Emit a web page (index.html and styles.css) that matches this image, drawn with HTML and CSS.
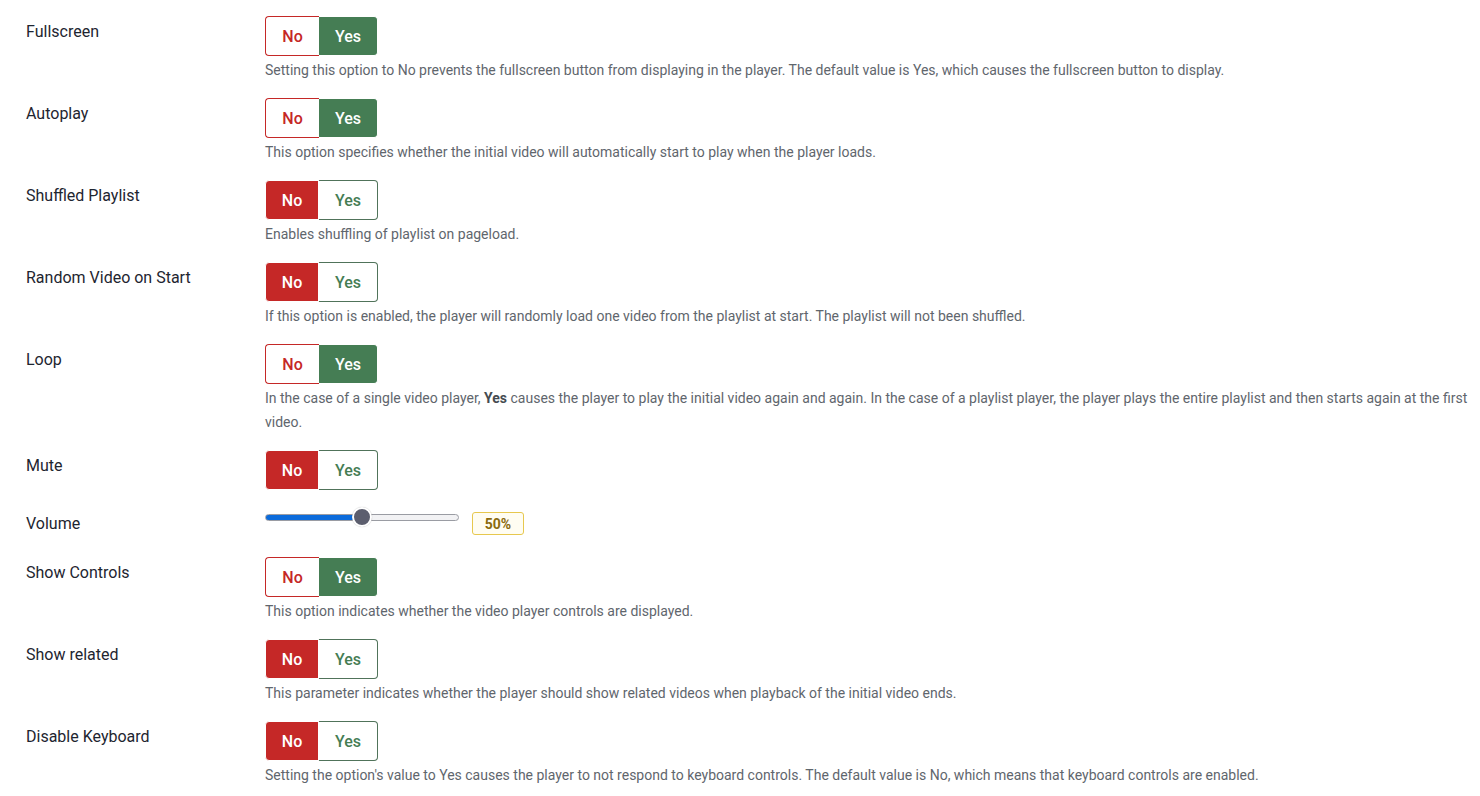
FILE: index.html
```html
<!DOCTYPE html>
<html lang="en">
	<head>
		<meta charset="UTF-8" />
		<meta name="viewport" content="width=device-width, initial-scale=1.0" />
		<title>Player Options</title>
		<link rel="stylesheet" href="styles.css">
	</head>
	<body>
		<form class="options">
			<div class="control-group">
				<div class="control-label">Fullscreen</div>
				<div class="controls">
					<div class="switcher yes-on"><span class="sw-no">No</span><span class="sw-yes">Yes</span></div>
					<div class="form-text">Setting this option to No prevents the fullscreen button from displaying in the player. The default value is Yes, which causes the fullscreen button to display.</div>
				</div>
			</div>

			<div class="control-group">
				<div class="control-label">Autoplay</div>
				<div class="controls">
					<div class="switcher yes-on"><span class="sw-no">No</span><span class="sw-yes">Yes</span></div>
					<div class="form-text">This option specifies whether the initial video will automatically start to play when the player loads.</div>
				</div>
			</div>

			<div class="control-group">
				<div class="control-label">Shuffled Playlist</div>
				<div class="controls">
					<div class="switcher no-on"><span class="sw-no">No</span><span class="sw-yes">Yes</span></div>
					<div class="form-text">Enables shuffling of playlist on pageload.</div>
				</div>
			</div>

			<div class="control-group">
				<div class="control-label">Random Video on Start</div>
				<div class="controls">
					<div class="switcher no-on"><span class="sw-no">No</span><span class="sw-yes">Yes</span></div>
					<div class="form-text">If this option is enabled, the player will randomly load one video from the playlist at start. The playlist will not been shuffled.</div>
				</div>
			</div>

			<div class="control-group">
				<div class="control-label">Loop</div>
				<div class="controls">
					<div class="switcher yes-on"><span class="sw-no">No</span><span class="sw-yes">Yes</span></div>
					<div class="form-text">In the case of a single video player, <strong>Yes</strong> causes the player to play the initial video again and again. In the case of a playlist player, the player plays the entire playlist and then starts again at the first video.</div>
				</div>
			</div>

			<div class="control-group">
				<div class="control-label">Mute</div>
				<div class="controls">
					<div class="switcher no-on"><span class="sw-no">No</span><span class="sw-yes">Yes</span></div>
				</div>
			</div>

			<div class="control-group">
				<div class="control-label volume-label">Volume</div>
				<div class="controls volume">
					<input type="range" class="range" min="0" max="100" value="50" style="--value: 50%" />
					<span class="badge">50%</span>
				</div>
			</div>

			<div class="control-group">
				<div class="control-label">Show Controls</div>
				<div class="controls">
					<div class="switcher yes-on"><span class="sw-no">No</span><span class="sw-yes">Yes</span></div>
					<div class="form-text">This option indicates whether the video player controls are displayed.</div>
				</div>
			</div>

			<div class="control-group">
				<div class="control-label">Show related</div>
				<div class="controls">
					<div class="switcher no-on"><span class="sw-no">No</span><span class="sw-yes">Yes</span></div>
					<div class="form-text">This parameter indicates whether the player should show related videos when playback of the initial video ends.</div>
				</div>
			</div>

			<div class="control-group">
				<div class="control-label">Disable Keyboard</div>
				<div class="controls">
					<div class="switcher no-on"><span class="sw-no">No</span><span class="sw-yes">Yes</span></div>
					<div class="form-text">Setting the option's value to Yes causes the player to not respond to keyboard controls. The default value is No, which means that keyboard controls are enabled.</div>
				</div>
			</div>
		</form>
	</body>
</html>
```

FILE: styles.css
```css
body {
	font-family: Roboto, "Liberation Sans", Arial, sans-serif;
	margin: 0;
	padding: 0;
	background-color: #fff;
	color: #1e2530;
}

.options {
	padding: 16px 10px 0 26px;
}

.control-group {
	display: flex;
	margin-bottom: 16px;
}

.control-label {
	width: 239px;
	flex-shrink: 0;
	font-size: 16px;
	line-height: 24px;
	padding-top: 4px;
}

.volume-label {
	padding-top: 6px;
}

.controls {
	flex: 1;
}

.switcher {
	display: flex;
	height: 40px;
	font-size: 16px;
	font-weight: 500;
}

.switcher span {
	display: flex;
	align-items: center;
	justify-content: center;
	box-sizing: border-box;
	border: 1px solid;
}

.sw-no {
	width: 54px;
	border-color: #c52827;
	color: #c52827;
	border-radius: 4px 0 0 4px;
}

.sw-yes {
	width: 59px;
	border-color: #457d54;
	color: #457d54;
	border-radius: 0 4px 4px 0;
	border-left: none !important;
}

.no-on .sw-no {
	background-color: #c52827;
	color: #fff;
}

.yes-on .sw-yes {
	background-color: #457d54;
	color: #fff;
}

.yes-on .sw-no {
	border-right: none;
}

.no-on .sw-yes {
	border-color: #50735a;
}

.form-text {
	margin-top: 2px;
	font-size: 14px;
	line-height: 24px;
	color: #5f666d;
}

.form-text strong {
	color: #454b51;
}

.volume {
	display: flex;
	align-items: flex-start;
	min-height: 35px;
	padding-top: 1px;
	box-sizing: border-box;
}

.range {
	-webkit-appearance: none;
	appearance: none;
	width: 194px;
	height: 20px;
	margin: 0;
	background: transparent;
}

.range::-webkit-slider-runnable-track {
	height: 7px;
	border-radius: 4px;
	box-sizing: border-box;
	border: 1px solid #9a9ca3;
	background: linear-gradient(to right, #0b6bdb var(--value), #f2f2f4 var(--value));
}

.range::-webkit-slider-thumb {
	-webkit-appearance: none;
	width: 20px;
	height: 20px;
	margin-top: -7.5px;
	border-radius: 50%;
	background-color: #5c5e6e;
	border: 2px solid #fff;
	box-sizing: border-box;
	box-shadow: 0 0 1px rgba(0, 0, 0, 0.3);
}

.badge {
	margin-top: 5px;
	margin-left: 13px;
	width: 52px;
	height: 23px;
	box-sizing: border-box;
	display: flex;
	align-items: center;
	justify-content: center;
	border: 1px solid #e7c84e;
	border-radius: 3px;
	background-color: #fffdf2;
	color: #8a6a0e;
	font-size: 14px;
	font-weight: bold;
}
```
